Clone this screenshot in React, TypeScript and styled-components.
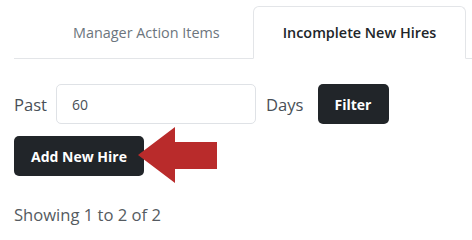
import styled, { createGlobalStyle } from "styled-components";

const GlobalStyle = createGlobalStyle`
  body {
    margin: 0;
    background: #ffffff;
    font-family: "Open Sans", Lato, sans-serif;
  }
`;

const Page = styled.div`
  width: 472px;
  height: 240px;
  overflow: hidden;
  padding: 6px 0 0 14px;
  box-sizing: border-box;
`;

const TabNav = styled.div`
  display: flex;
  align-items: flex-end;
  gap: 5px;
  padding-left: 31px;
  border-bottom: 1px solid #e3e5e8;
  height: 53px;
  box-sizing: border-box;
`;

const Tab = styled.div<{ active?: boolean }>`
  flex-shrink: 0;
  white-space: nowrap;
  height: 53px;
  margin-bottom: -1px;
  padding: 0 ${(p) => (p.active ? "29px" : "27px")};
  display: flex;
  align-items: center;
  justify-content: center;
  box-sizing: border-box;
  font-size: 14.4px;
  font-weight: ${(p) => (p.active ? 600 : 400)};
  color: ${(p) => (p.active ? "#212529" : "#6c757d")};
  background: ${(p) => (p.active ? "#ffffff" : "transparent")};
  border: 1px solid ${(p) => (p.active ? "#e3e5e8" : "transparent")};
  border-bottom-color: ${(p) => (p.active ? "#ffffff" : "transparent")};
  border-radius: 6px 6px 0 0;
`;

const FilterRow = styled.div`
  display: flex;
  align-items: center;
  margin-top: 25px;
  height: 40px;
`;

const Label = styled.span`
  font-size: 16.6px;
  color: #495057;
`;

const DaysInput = styled.input`
  width: 200px;
  height: 40px;
  box-sizing: border-box;
  margin: 0 10px 0 9px;
  padding: 0 15px;
  border: 1px solid #dfe2e6;
  border-radius: 5px;
  font-family: inherit;
  font-size: 14px;
  color: #495057;
  outline: none;
`;

const DarkButton = styled.button`
  height: 40px;
  padding: 0;
  background: #212529;
  color: #ffffff;
  border: none;
  border-radius: 5px;
  font-family: inherit;
  font-weight: 700;
  font-size: 14px;
`;

const FilterButton = styled(DarkButton)`
  margin-left: 14px;
  width: 71px;
`;

const AddRow = styled.div`
  position: relative;
  margin-top: 12px;
  width: 130px;
`;

const AddButton = styled(DarkButton)`
  width: 130px;
`;

const Arrow = styled.svg`
  position: absolute;
  left: 124px;
  top: -9px;
`;

const Showing = styled.div`
  margin-top: 27px;
  font-size: 16.6px;
  color: #555b61;
`;

export default function App() {
  return (
    <>
      <GlobalStyle />
      <Page>
        <TabNav>
          <Tab>Manager Action Items</Tab>
          <Tab active>Incomplete New Hires</Tab>
        </TabNav>
        <FilterRow>
          <Label>Past</Label>
          <DaysInput defaultValue="60" />
          <Label>Days</Label>
          <FilterButton>Filter</FilterButton>
        </FilterRow>
        <AddRow>
          <AddButton>Add New Hire</AddButton>
          <Arrow width="80" height="57" viewBox="0 0 80 57">
            <polygon
              points="0,28 37,0 37,15 79,15 79,42 37,42 37,56"
              fill="#b92b2b"
            />
          </Arrow>
        </AddRow>
        <Showing>Showing 1 to 2 of 2</Showing>
      </Page>
    </>
  );
}
